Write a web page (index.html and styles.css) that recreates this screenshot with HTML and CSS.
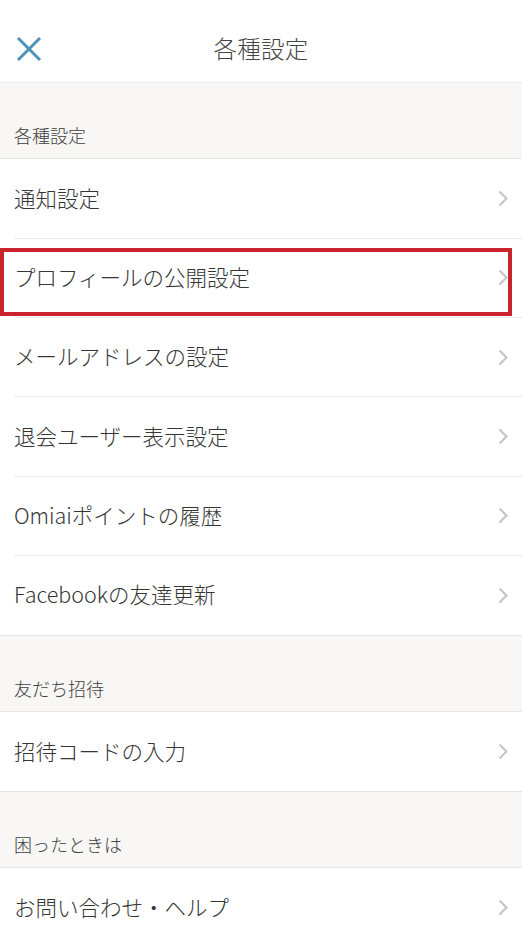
FILE: index.html
```html
<!DOCTYPE html>
<html lang="ja">
<head>
<meta charset="utf-8">
<link rel="stylesheet" href="styles.css">
</head>
<body>
<div class="screen">
  <header class="nav">
    <span class="close">
      <svg width="26" height="26" viewBox="0 0 26 26"><path d="M2 2 L24 24 M24 2 L2 24" stroke="#4c93bb" stroke-width="3" stroke-linecap="butt" fill="none"/></svg>
    </span>
    <h1 class="title">各種設定</h1>
  </header>

  <div class="section">各種設定</div>
  <ul class="group">
    <li class="row"><span>通知設定</span><svg class="chev" width="10" height="17" viewBox="0 0 10 17"><path d="M1.5 1.5 L8.5 8.5 L1.5 15.5" stroke="#c4c4c8" stroke-width="2" fill="none"/></svg></li>
    <li class="row"><span>プロフィールの公開設定</span><svg class="chev" width="10" height="17" viewBox="0 0 10 17"><path d="M1.5 1.5 L8.5 8.5 L1.5 15.5" stroke="#c4c4c8" stroke-width="2" fill="none"/></svg><div class="highlight"></div></li>
    <li class="row"><span>メールアドレスの設定</span><svg class="chev" width="10" height="17" viewBox="0 0 10 17"><path d="M1.5 1.5 L8.5 8.5 L1.5 15.5" stroke="#c4c4c8" stroke-width="2" fill="none"/></svg></li>
    <li class="row"><span>退会ユーザー表示設定</span><svg class="chev" width="10" height="17" viewBox="0 0 10 17"><path d="M1.5 1.5 L8.5 8.5 L1.5 15.5" stroke="#c4c4c8" stroke-width="2" fill="none"/></svg></li>
    <li class="row"><span>Omiaiポイントの履歴</span><svg class="chev" width="10" height="17" viewBox="0 0 10 17"><path d="M1.5 1.5 L8.5 8.5 L1.5 15.5" stroke="#c4c4c8" stroke-width="2" fill="none"/></svg></li>
    <li class="row"><span>Facebookの友達更新</span><svg class="chev" width="10" height="17" viewBox="0 0 10 17"><path d="M1.5 1.5 L8.5 8.5 L1.5 15.5" stroke="#c4c4c8" stroke-width="2" fill="none"/></svg></li>
  </ul>

  <div class="section">友だち招待</div>
  <ul class="group">
    <li class="row"><span>招待コードの入力</span><svg class="chev" width="10" height="17" viewBox="0 0 10 17"><path d="M1.5 1.5 L8.5 8.5 L1.5 15.5" stroke="#c4c4c8" stroke-width="2" fill="none"/></svg></li>
  </ul>

  <div class="section">困ったときは</div>
  <ul class="group">
    <li class="row"><span>お問い合わせ・ヘルプ</span><svg class="chev" width="10" height="17" viewBox="0 0 10 17"><path d="M1.5 1.5 L8.5 8.5 L1.5 15.5" stroke="#c4c4c8" stroke-width="2" fill="none"/></svg></li>
  </ul>
</div>
</body>
</html>
```

FILE: styles.css
```css
* { box-sizing: border-box; }
html, body { margin: 0; padding: 0; background: #fff; }
body {
  font-family: "Noto Sans CJK JP", "Noto Sans", sans-serif;
  font-weight: 300;
  color: #3a3a3a;
}
.screen { width: 522px; height: 945px; overflow: hidden; background: #fff; }

.nav {
  height: 83px;
  border-bottom: 1px solid #ececec;
  display: flex;
  align-items: center;
  justify-content: center;
  padding-top: 14px;
  position: relative;
}
.close {
  position: absolute;
  left: 16px;
  top: 36px;
  width: 26px;
  height: 26px;
  display: flex;
}
.title {
  margin: 0;
  font-size: 23.5px;
  font-weight: 300;
  color: #444;
  letter-spacing: 0.3px;
}

.section {
  height: 75px;
  background: #f8f7f5;
  display: flex;
  align-items: flex-end;
  padding: 0 14px 14px;
  font-size: 18px;
  color: #404040;
  line-height: 1;
}

.group {
  list-style: none;
  margin: 0;
  padding: 0;
  border-top: 1px solid #e6e5e3;
  border-bottom: 1px solid #e6e5e3;
  background: #fff;
}
.row {
  position: relative;
  height: 79.33px;
  display: flex;
  align-items: center;
  justify-content: space-between;
  padding: 0 14px 3px;
  font-size: 21.5px;
  color: #353535;
}
.row + .row::before {
  content: "";
  position: absolute;
  left: 14px;
  right: 0;
  top: -0.5px;
  height: 1px;
  background: #ebebeb;
}
.chev { flex: none; margin-top: 3px; }

.highlight {
  position: absolute;
  left: 0;
  top: 10px;
  width: 512px;
  height: 68px;
  border: 4px solid #c9242d;
  pointer-events: none;
}
```
